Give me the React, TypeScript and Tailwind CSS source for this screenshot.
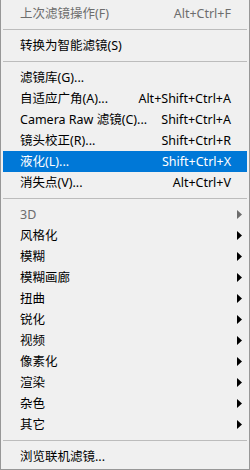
import React from "react";

type Item =
  | { type: "sep" }
  | {
      type: "item";
      label: string;
      shortcut?: string;
      sub?: boolean;
      disabled?: boolean;
      active?: boolean;
    };

const items: Item[] = [
  { type: "item", label: "上次滤镜操作(F)", shortcut: "Alt+Ctrl+F", disabled: true },
  { type: "sep" },
  { type: "item", label: "转换为智能滤镜(S)" },
  { type: "sep" },
  { type: "item", label: "滤镜库(G)..." },
  { type: "item", label: "自适应广角(A)...", shortcut: "Alt+Shift+Ctrl+A" },
  { type: "item", label: "Camera Raw 滤镜(C)...", shortcut: "Shift+Ctrl+A" },
  { type: "item", label: "镜头校正(R)...", shortcut: "Shift+Ctrl+R" },
  { type: "item", label: "液化(L)...", shortcut: "Shift+Ctrl+X", active: true },
  { type: "item", label: "消失点(V)...", shortcut: "Alt+Ctrl+V" },
  { type: "sep" },
  { type: "item", label: "3D", sub: true, disabled: true },
  { type: "item", label: "风格化", sub: true },
  { type: "item", label: "模糊", sub: true },
  { type: "item", label: "模糊画廊", sub: true },
  { type: "item", label: "扭曲", sub: true },
  { type: "item", label: "锐化", sub: true },
  { type: "item", label: "视频", sub: true },
  { type: "item", label: "像素化", sub: true },
  { type: "item", label: "渲染", sub: true },
  { type: "item", label: "杂色", sub: true },
  { type: "item", label: "其它", sub: true },
  { type: "sep" },
  { type: "item", label: "浏览联机滤镜..." },
];

const Arrow = ({ color }: { color: string }) => (
  <svg width="5" height="9" viewBox="0 0 5 9" className="absolute right-[5px] top-[6px]">
    <polygon points="0,0 5,4.5 0,9" fill={color} />
  </svg>
);

const App = () => {
  return (
    <div
      className="w-[250px] h-[470px] bg-[#f0f0f0] border-x border-b border-[#979797] pt-[3px] px-[2px] text-[12.5px] text-black"
      style={{ fontFamily: '"Noto Sans", "Noto Sans CJK SC", sans-serif' }}
    >
      {items.map((it, i) => {
        if (it.type === "sep") {
          return (
            <div key={i} className="h-[11px] flex items-center">
              <div className="w-full h-px bg-[#bcbcbc]" />
            </div>
          );
        }
        const color = it.active ? "text-white" : it.disabled ? "text-[#6d6d6d]" : "text-black";
        return (
          <div
            key={i}
            className={`relative h-[21px] flex items-center justify-between pl-[17px] pr-[16px] leading-[21px] whitespace-nowrap ${
              it.active ? "bg-[#0078d7]" : ""
            } ${color}`}
          >
            <span>{it.label}</span>
            {it.shortcut && <span>{it.shortcut}</span>}
            {it.sub && <Arrow color={it.disabled ? "#6d6d6d" : "#000000"} />}
          </div>
        );
      })}
    </div>
  );
};

export default App;
